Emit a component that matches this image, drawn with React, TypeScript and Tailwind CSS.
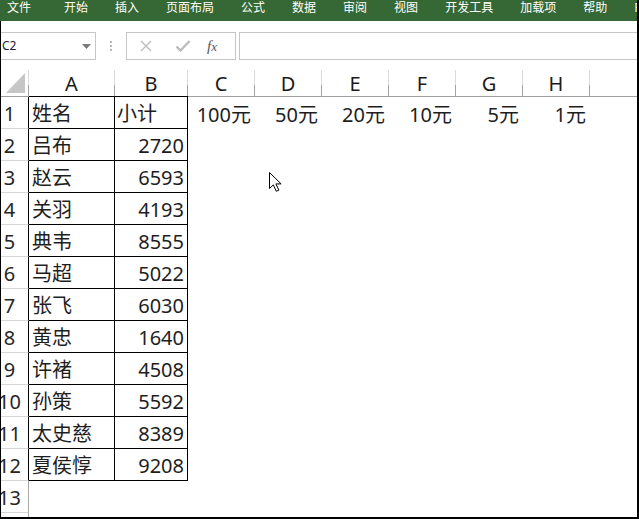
import React from "react";

const tabs = ["文件", "开始", "插入", "页面布局", "公式", "数据", "审阅", "视图", "开发工具", "加载项", "帮助", "PDF工具集"];

const cols = [
  { k: "A", w: "w-[86px]" },
  { k: "B", w: "w-[73px]" },
  { k: "C", w: "w-[67px]" },
  { k: "D", w: "w-[67px]" },
  { k: "E", w: "w-[67px]" },
  { k: "F", w: "w-[67px]" },
  { k: "G", w: "w-[67px]" },
  { k: "H", w: "w-[67px]" },
];

const data: [string, string][] = [
  ["姓名", "小计"],
  ["吕布", "2720"],
  ["赵云", "6593"],
  ["关羽", "4193"],
  ["典韦", "8555"],
  ["马超", "5022"],
  ["张飞", "6030"],
  ["黄忠", "1640"],
  ["许褚", "4508"],
  ["孙策", "5592"],
  ["太史慈", "8389"],
  ["夏侯惇", "9208"],
];

const money = ["100元", "50元", "20元", "10元", "5元", "1元"];

function Sep() {
  return <div className="w-px self-stretch bg-[linear-gradient(to_bottom,#dadada_57%,#a3a3a3_57%)]" />;
}

function RowHead({ n, boxed }: { n: number; boxed: boolean }) {
  return (
    <div
      className={`flex w-[28px] shrink-0 items-center border-r border-b border-b-[#d6d6d6] pt-[3px] ${
        boxed ? "border-r-black" : "border-r-[#a8a8a8]"
      }`}
    >
      <div className="flex w-[17px] justify-center whitespace-nowrap text-[#262626]">{n}</div>
    </div>
  );
}

export default function App() {
  return (
    <div className="relative h-[519px] w-[639px] overflow-hidden border-r-2 border-b-2 border-black bg-white [font-family:'Noto_Sans','Noto_Sans_CJK_SC',sans-serif]">
      {/* ribbon tabs */}
      <div className="flex h-[21px] items-start gap-[27px] whitespace-nowrap bg-[#356834] pl-[7px] text-[12px] leading-[14px] text-white [font-family:'Noto_Sans_CJK_SC',sans-serif]">
        {tabs.map((t, i) => (
          <span key={t} className={i === 1 ? "ml-[6px]" : ""}>
            {t}
          </span>
        ))}
      </div>

      <div className="flex h-[496px] flex-col border-l border-black">
        {/* formula bar */}
        <div className="mt-[11px] flex h-[28px] items-stretch">
          <div className="flex w-[95px] items-center justify-between border-y border-r border-[#c6c6c6] pl-[1px] pr-[4px]">
            <span className="text-[12px] text-[#1b1b3a] [font-family:'Noto_Sans',sans-serif]">C2</span>
            <svg width="9" height="5" viewBox="0 0 9 5">
              <path d="M0 0h9L4.5 5z" fill="#7a7a7a" />
            </svg>
          </div>
          <div className="flex w-[30px] flex-col items-center justify-center gap-[2px]">
            <span className="h-[2px] w-[2px] bg-[#b8b8b8]" />
            <span className="h-[2px] w-[2px] bg-[#b8b8b8]" />
            <span className="h-[2px] w-[2px] bg-[#b8b8b8]" />
          </div>
          <div className="flex w-[110px] items-center border border-[#c6c6c6] pl-[12px]">
            <svg width="14" height="14" viewBox="0 0 14 14">
              <path d="M2 2l10 10M12 2L2 12" stroke="#bcbcbc" strokeWidth="1.4" />
            </svg>
            <svg className="ml-[22px]" width="16" height="14" viewBox="0 0 16 14">
              <path d="M1.5 7.5l4 4L14.5 2" stroke="#bcbcbc" strokeWidth="2.4" fill="none" />
            </svg>
            <span className="ml-[16px] text-[15px] italic leading-none text-[#555] [font-family:'Liberation_Serif',serif]">
              f<span className="text-[13px]">x</span>
            </span>
          </div>
          <div className="ml-[3px] flex-1 border-y border-l border-[#c6c6c6]" />
        </div>

        {/* column headers */}
        <div className="mt-[10px] flex h-[27px] shrink-0 text-[20px] text-[#1a1a1a]">
          <div className="flex w-[28px] shrink-0 border-b border-[#a0a0a0]">
            <div className="flex-1">
              <svg width="27" height="26" viewBox="0 0 27 26">
                <path d="M24 3v20H5z" fill="#c6c6c6" />
              </svg>
            </div>
            <Sep />
          </div>
          {cols.map((c, i) => (
            <div
              key={c.k}
              className={`flex ${c.w} shrink-0 border-b ${i < 2 ? "border-black" : "border-[#a0a0a0]"}`}
            >
              <div className="flex flex-1 items-center justify-center pt-[1px] leading-none">{c.k}</div>
              <Sep />
            </div>
          ))}
          <div className="flex-1 border-b border-[#a0a0a0]" />
        </div>

        {/* rows */}
        <div className="flex flex-1 flex-col overflow-hidden text-[20px] text-[#1e1e1e]">
          {data.map(([name, val], r) => (
            <div key={r} className="flex h-[32px] shrink-0">
              <RowHead n={r + 1} boxed />
              <div className="flex w-[86px] shrink-0 items-center border-r border-b border-black pl-[3px] pt-[3px]">
                {name}
              </div>
              <div
                className={`flex w-[73px] shrink-0 items-center border-r border-b border-black pr-[3px] pt-[3px] ${
                  r === 0 ? "justify-start pl-[2px]" : "justify-end"
                }`}
              >
                {val}
              </div>
              {r === 0 &&
                money.map((m) => (
                  <div key={m} className="flex w-[67px] shrink-0 items-center justify-end pr-[4px] pt-[3px]">
                    {m}
                  </div>
                ))}
            </div>
          ))}
          {[13, 14].map((n) => (
            <div key={n} className="flex h-[32px] shrink-0">
              <RowHead n={n} boxed={false} />
            </div>
          ))}
        </div>
      </div>

      {/* mouse pointer */}
      <svg className="absolute left-[268px] top-[171px]" width="14" height="22" viewBox="0 0 14 22">
        <path
          d="M1.5 1.5v16l3.8-3.6 3 6.4 2.6-1.2-3-6.2h5.2z"
          fill="#fff"
          stroke="#000"
          strokeWidth="1"
          strokeLinejoin="miter"
        />
      </svg>
    </div>
  );
}
